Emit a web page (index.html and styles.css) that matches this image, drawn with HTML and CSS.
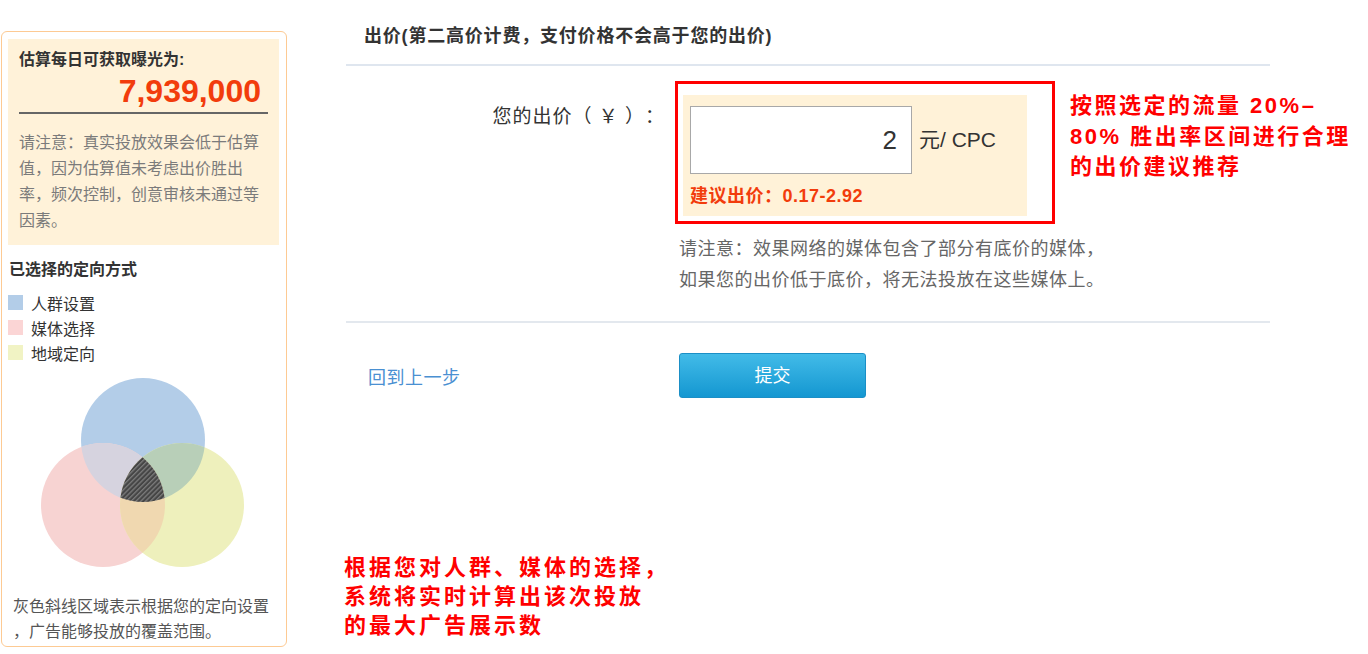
FILE: index.html
```html
<!DOCTYPE html>
<html>

	<head lang="zh-CN">
		<meta charset="UTF-8">
		<title>出价设置</title>
		<link rel="stylesheet" href="styles.css">
	</head>

	<body>
		<div class="page">
			<!-- 左侧：曝光估算 -->
			<div class="sidebar">
				<div class="estimate">
					<h3>估算每日可获取曝光为:</h3>
					<div class="num">7,939,000</div>
					<p>请注意：真实投放效果会低于估算<br>值，因为估算值未考虑出价胜出<br>率，频次控制，创意审核未通过等<br>因素。</p>
				</div>
				<h4 class="sel-title">已选择的定向方式</h4>
				<ul class="legend">
					<li><i class="c-blue"></i>人群设置</li>
					<li><i class="c-pink"></i>媒体选择</li>
					<li><i class="c-yellow"></i>地域定向</li>
				</ul>
				<svg class="venn" width="284" height="229" viewBox="0 0 284 229">
					<defs>
						<clipPath id="cb"><circle cx="141" cy="75" r="62"/></clipPath>
						<clipPath id="cp"><circle cx="101" cy="140" r="62"/></clipPath>
						<pattern id="hatch" width="3.4" height="3.4" patternUnits="userSpaceOnUse" patternTransform="rotate(45)">
							<rect width="3.4" height="3.4" fill="#454545"/>
							<rect width="1.3" height="3.4" fill="#7c7c7c"/>
						</pattern>
					</defs>
					<circle cx="141" cy="75" r="62" fill="#b3cde8"/>
					<circle cx="101" cy="140" r="62" fill="#f7d3d2"/>
					<circle cx="180" cy="140" r="62" fill="#eef0bc"/>
					<circle cx="101" cy="140" r="62" fill="#d6d3df" clip-path="url(#cb)"/>
					<circle cx="180" cy="140" r="62" fill="#b8cfb8" clip-path="url(#cb)"/>
					<circle cx="180" cy="140" r="62" fill="#f0d8b0" clip-path="url(#cp)"/>
					<g clip-path="url(#cb)">
						<circle cx="180" cy="140" r="62" fill="url(#hatch)" clip-path="url(#cp)"/>
					</g>
				</svg>
				<p class="cover-note">灰色斜线区域表示根据您的定向设置<br>，广告能够投放的覆盖范围。</p>
			</div>

			<!-- 右侧：出价 -->
			<div class="main">
				<h2>出价(第二高价计费，支付价格不会高于您的出价)</h2>
				<div class="bid">
					<label>您的出价（ ￥ ）：</label>
					<div class="mark">
						<div class="price-box">
							<div class="price-line">
								<input type="text" value="2">
								<span class="unit">元/ CPC</span>
							</div>
							<div class="suggest">建议出价：0.17-2.92</div>
						</div>
					</div>
					<div class="tip">按照选定的流量 20%–<br>80% 胜出率区间进行合理<br>的出价建议推荐</div>
				</div>
				<p class="note">请注意：效果网络的媒体包含了部分有底价的媒体，<br>如果您的出价低于底价，将无法投放在这些媒体上。</p>
				<div class="actions">
					<a class="back" href="#">回到上一步</a>
					<span class="submit">提交</span>
				</div>
				<div class="explain">根据您对人群、媒体的选择，<br>系统将实时计算出该次投放<br>的最大广告展示数</div>
			</div>
		</div>
	</body>

</html>
```

FILE: styles.css
```css
* {
	box-sizing: border-box;
}

body {
	margin: 0;
	font-family: "Liberation Sans", "Noto Sans CJK SC", sans-serif;
	color: #333;
	background: #fff;
	text-spacing-trim: space-all;
}

.page {
	display: flex;
	align-items: flex-start;
}

/* 左侧栏 */
.sidebar {
	width: 286px;
	margin: 31px 0 0 1px;
	padding: 7px 0 2px;
	border: 1px solid #fdca93;
	border-radius: 6px;
}

.estimate {
	margin: 0 7px 0 6px;
	padding: 10px 11px 11px;
	background: #fff2d9;
}

.estimate h3 {
	margin: 0;
	font-size: 16px;
	line-height: 22px;
	font-weight: bold;
	color: #333;
}

.estimate .num {
	margin-top: 2px;
	padding: 0 7px 3px 0;
	font: bold 32px/36px "Liberation Sans", sans-serif;
	color: #f23c0c;
	text-align: right;
	border-bottom: 2px solid #666;
}

.estimate p {
	margin: 16px 0 0;
	font-size: 16px;
	line-height: 26px;
	color: #7b7b7b;
	white-space: nowrap;
}

.sel-title {
	margin: 14px 0 0 7px;
	font-size: 16px;
	line-height: 22px;
	font-weight: bold;
	color: #333;
}

.legend {
	list-style: none;
	margin: 9px 0 0;
	padding: 0 0 0 6px;
}

.legend li {
	display: flex;
	align-items: center;
	height: 25px;
	font-size: 16px;
	color: #333;
}

.legend i {
	width: 15px;
	height: 15px;
	margin-right: 8px;
}

.c-blue {
	background: #b3cde8;
}

.c-pink {
	background: #fbd5d5;
}

.c-yellow {
	background: #f1f3c4;
}

.venn {
	display: block;
}

.cover-note {
	margin: 0;
	padding-left: 11px;
	font-size: 16px;
	line-height: 25px;
	color: #555;
	white-space: nowrap;
}

/* 右侧主体 */
.main {
	width: 924px;
	margin-left: 59px;
}

.main h2 {
	margin: 0;
	height: 66px;
	padding: 8px 0 0 18px;
	font-size: 18px;
	line-height: 56px;
	letter-spacing: .8px;
	color: #333;
	border-bottom: 2px solid #dfe6ef;
}

.bid {
	display: flex;
	align-items: flex-start;
	margin-top: 15px;
}

.bid label {
	flex: none;
	width: 329px;
	padding: 24px 10px 0 0;
	text-align: right;
	font-size: 19px;
	line-height: 24px;
	letter-spacing: 1px;
	color: #333;
	white-space: nowrap;
}

.mark {
	flex: none;
	border: 3px solid #f00;
	padding: 11px 25px 5px 5px;
}

.price-box {
	width: 344px;
	padding: 11px 7px 9px;
	background: #fff2d8;
}

.price-line {
	display: flex;
	align-items: center;
}

.price-line input {
	width: 222px;
	height: 68px;
	padding: 0 14px;
	border: 1px solid #a8a8a8;
	text-align: right;
	font: 26px "Liberation Sans", sans-serif;
	color: #333;
	background: #fff;
}

.unit {
	margin: 0 0 5px 7px;
	font-size: 21px;
	color: #333;
}

.suggest {
	margin-top: 11px;
	font-size: 18px;
	line-height: 22px;
	font-weight: bold;
	letter-spacing: .5px;
	color: #f23c0c;
}

.tip {
	flex: none;
	margin: 10px 0 0 15px;
	font-size: 22px;
	line-height: 30.5px;
	font-weight: bold;
	letter-spacing: 2.5px;
	color: #f00;
	white-space: nowrap;
}

.note {
	margin: 10px 0 0;
	padding-left: 333px;
	font-size: 18px;
	line-height: 31px;
	letter-spacing: .5px;
	color: #666;
}

.actions {
	display: flex;
	align-items: center;
	margin-top: 25px;
	padding-top: 30px;
	border-top: 2px solid #e3e8ee;
}

.back {
	width: 333px;
	padding-left: 22px;
	font-size: 18px;
	letter-spacing: .5px;
	color: #4a90d2;
	text-decoration: none;
}

.submit {
	width: 187px;
	height: 45px;
	border: 1px solid #1b8fc6;
	border-radius: 3px;
	background: linear-gradient(#42bbe8, #1497d1);
	color: #fff;
	font-size: 18px;
	line-height: 45px;
	text-align: center;
	cursor: pointer;
}

.explain {
	margin: 155px 0 0 -2px;
	font-size: 22px;
	line-height: 29px;
	font-weight: bold;
	letter-spacing: 3px;
	color: #f00;
	white-space: nowrap;
}
```
